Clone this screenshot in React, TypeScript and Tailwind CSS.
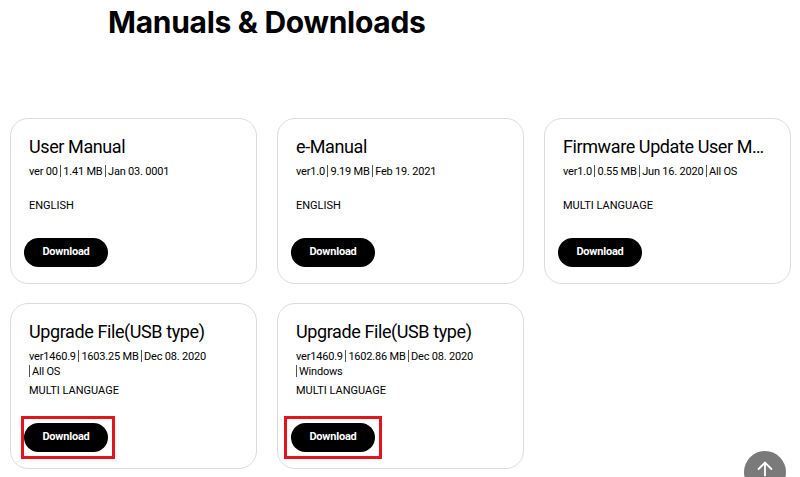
import { ArrowUp } from "lucide-react";

type Item = {
  title: string;
  meta: string[];
  lang: string;
  marked?: string;
};

const items: Item[] = [
  { title: "User Manual", meta: ["ver 00", "1.41 MB", "Jan 03. 0001"], lang: "ENGLISH" },
  { title: "e-Manual", meta: ["ver1.0", "9.19 MB", "Feb 19. 2021"], lang: "ENGLISH" },
  {
    title: "Firmware Update User Manual",
    meta: ["ver1.0", "0.55 MB", "Jun 16. 2020", "All OS"],
    lang: "MULTI LANGUAGE",
  },
  {
    title: "Upgrade File(USB type)",
    meta: ["ver1460.9", "1603.25 MB", "Dec 08. 2020", "All OS"],
    lang: "MULTI LANGUAGE",
    marked: "left-[-3px]",
  },
  {
    title: "Upgrade File(USB type)",
    meta: ["ver1460.9", "1602.86 MB", "Dec 08. 2020", "Windows"],
    lang: "MULTI LANGUAGE",
    marked: "left-[-7px]",
  },
];

function Meta({ parts }: { parts: string[] }) {
  return (
    <div className="h-[30px] mt-[6px] text-[11px] leading-[15px] text-black tracking-[-0.2px]">
      {parts.map((p, i) => (
        <span key={i}>
          {i > 0 && " "}
          <span className="whitespace-nowrap">
            {i > 0 && (
              <span className="inline-block w-px h-[12px] bg-[#555] align-[-2px] mr-[2px]" />
            )}
            {p}
          </span>
        </span>
      ))}
    </div>
  );
}

function Card({ item }: { item: Item }) {
  return (
    <div className="flex flex-col h-[166px] rounded-[18px] border border-[#dcdcdc] bg-white px-[18px] pt-[17px]">
      <div className="text-[18px] leading-[22px] text-black truncate tracking-[-0.4px]">
        {item.title}
      </div>
      <Meta parts={item.meta} />
      <div className="mt-[4px] text-[11px] leading-[15px] text-black">{item.lang}</div>
      <div className="mt-[25px] ml-[-5px]">
        <span className="relative inline-block">
          <button className="w-[84px] h-[29px] rounded-full bg-black text-white text-[11px] font-bold tracking-[-0.2px]">
            Download
          </button>
          {item.marked && (
            <span
              className={`absolute ${item.marked} top-[-7px] right-[-7px] bottom-[-7px] border-[3px] border-[#e3141e]`}
            />
          )}
        </span>
      </div>
    </div>
  );
}

export default function App() {
  return (
    <div
      className="relative w-[800px] h-[477px] overflow-hidden bg-white"
      style={{ fontFamily: 'Roboto, "Noto Sans", sans-serif' }}
    >
      <h1
        className="pl-[108px] pt-[2px] text-[30px] leading-[40px] font-bold text-black tracking-[-0.3px]"
        style={{ fontFamily: 'Inter, "Noto Sans", sans-serif' }}
      >
        Manuals &amp; Downloads
      </h1>

      <div className="mt-[76px] grid grid-cols-[247px_247px_247px] gap-x-[20px] gap-y-[19px] pl-[10px]">
        {items.map((it, i) => (
          <Card key={i} item={it} />
        ))}
      </div>

      <button className="absolute right-[14px] bottom-[-16px] w-[42px] h-[42px] rounded-full bg-[#7a7a7a] flex items-start justify-center pt-[7px]">
        <ArrowUp className="w-[22px] h-[22px] text-white" strokeWidth={2} />
      </button>
    </div>
  );
}
